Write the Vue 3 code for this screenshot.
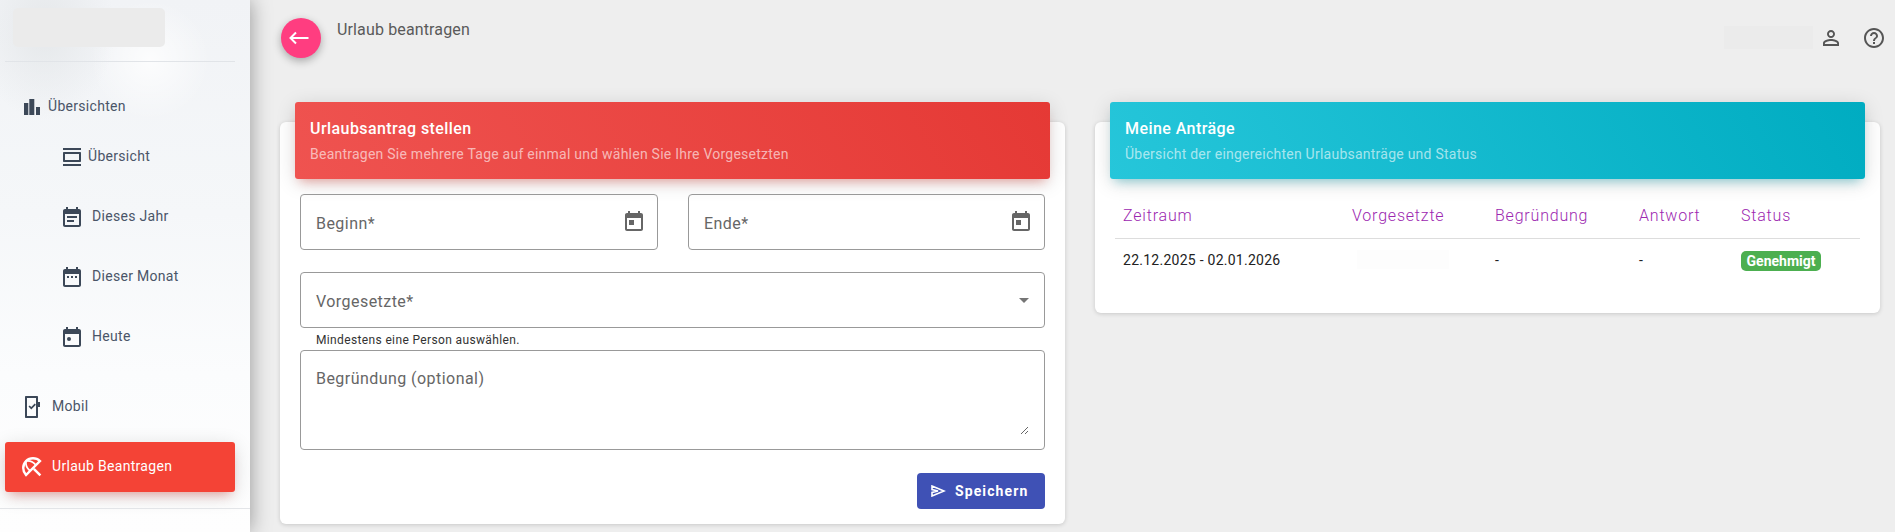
<template>
  <div class="layout">
    <aside class="sidebar">
      <div class="logo-wrap"><div class="logo"></div></div>
      <nav class="nav">
        <div class="parent">
          <svg class="ic-parent" viewBox="0 0 16 16"><path d="M0 4h4.3v12H0zM5.3 0h5v16h-5zM12 8h4v8h-4z" /></svg>
          <span>Übersichten</span>
        </div>
        <a class="sub first">
          <svg class="ic-sub" viewBox="0 0 18 18"><path d="M0 0h18v2H0zM0 16h18v2H0zM1 4h16c.6 0 1 .4 1 1v8c0 .6-.4 1-1 1H1c-.6 0-1-.4-1-1V5c0-.6.4-1 1-1zm1 2v6h14V6z" /></svg>
          <span>Übersicht</span>
        </a>
        <a class="sub">
          <svg class="ic-sub tall" viewBox="3 1 18 20"><path d="M17 10H7v2h10v-2zm2-7h-1V1h-2v2H8V1H6v2H5c-1.11 0-1.99.9-1.99 2L3 19c0 1.1.89 2 2 2h14c1.1 0 2-.9 2-2V5c0-1.1-.9-2-2-2zm0 16H5V8h14v11zm-5-5H7v2h7v-2z" /></svg>
          <span>Dieses Jahr</span>
        </a>
        <a class="sub">
          <svg class="ic-sub tall" viewBox="3 2 18 20"><path d="M9 11H7v2h2v-2zm4 0h-2v2h2v-2zm4 0h-2v2h2v-2zm2-7h-1V2h-2v2H8V2H6v2H5c-1.11 0-1.99.9-1.99 2L3 20c0 1.1.89 2 2 2h14c1.1 0 2-.9 2-2V6c0-1.1-.9-2-2-2zm0 16H5V9h14v11z" /></svg>
          <span>Dieser Monat</span>
        </a>
        <a class="sub">
          <svg class="ic-sub tall" viewBox="3 1 18 20"><path d="M19 3h-1V1h-2v2H8V1H6v2H5c-1.11 0-1.99.9-1.99 2L3 19c0 1.1.89 2 2 2h14c1.1 0 2-.9 2-2V5c0-1.1-.9-2-2-2zm0 16H5V8h14v11z" /><circle cx="9" cy="13" r="2" /></svg>
          <span>Heute</span>
        </a>
        <a class="top-item mobil">
          <svg class="ic-mobil" viewBox="0 0 15 22">
            <path d="M1 0h11c.6 0 1 .4 1 1v5h2v5h-2v10c0 .6-.4 1-1 1H1c-.6 0-1-.4-1-1V1c0-.6.4-1 1-1zm1 2v18h9V2z" />
            <path d="M3.5 10.6l1.2-1.2 1.6 1.6 3.4-3.4 1.2 1.2-4.6 4.6z" />
          </svg>
          <span>Mobil</span>
        </a>
        <a class="top-item active">
          <svg class="ic-beach" viewBox="0 0 24 24">
            <path class="dome" d="M6 20C2.3 16 2.3 9.7 6 6c3.8-3.7 10.2-3.7 14 0z" />
            <path class="ribs" d="M6 6c-.5 3.5 1 7.5 4.2 10M6 6c3.5-.5 7.5 1 10 4.2" />
            <path class="dome" d="M13.8 13.8l6.6 6.6" />
          </svg>
          <span>Urlaub Beantragen</span>
        </a>
      </nav>
      <div class="nav-end"></div>
    </aside>

    <main class="main">
      <header class="topbar">
        <button class="back" type="button">
          <svg viewBox="0 0 24 24"><path d="M1.5 12h18M7 6.5L1.5 12 7 17.5" /></svg>
        </button>
        <h1>Urlaub beantragen</h1>
        <div class="top-actions">
          <div class="user-name"></div>
          <svg class="top-icon" viewBox="0 0 24 24"><path d="M12 5.9c1.16 0 2.1.94 2.1 2.1s-.94 2.1-2.1 2.1S9.9 9.16 9.9 8s.94-2.1 2.1-2.1m0 9c2.97 0 6.1 1.46 6.1 2.1v1.1H5.9V17c0-.64 3.13-2.1 6.1-2.1M12 4C9.79 4 8 5.79 8 8s1.79 4 4 4 4-1.79 4-4-1.79-4-4-4zm0 9c-2.67 0-8 1.34-8 4v3h16v-3c0-2.66-5.33-4-8-4z" /></svg>
          <svg class="top-icon help" viewBox="0 0 24 24"><path d="M11 18h2v-2h-2v2zm1-16C6.48 2 2 6.48 2 12s4.48 10 10 10 10-4.48 10-10S17.52 2 12 2zm0 18c-4.41 0-8-3.59-8-8s3.59-8 8-8 8 3.59 8 8-3.59 8-8 8zm0-14c-2.21 0-4 1.79-4 4h2c0-1.1.9-2 2-2s2 .9 2 2c0 2-3 1.75-3 5h2c0-2.25 3-2.5 3-5 0-2.21-1.79-4-4-4z" /></svg>
        </div>
      </header>

      <div class="cards">
        <section class="card">
          <div class="card-head red">
            <h2>Urlaubsantrag stellen</h2>
            <p>Beantragen Sie mehrere Tage auf einmal und wählen Sie Ihre Vorgesetzten</p>
          </div>
          <form class="form" @submit.prevent>
            <div class="dates">
              <div v-for="label in dateFields" :key="label" class="field">
                <span>{{ label }}</span>
                <svg class="cal" viewBox="0 0 24 24"><path d="M19 3h-1V1h-2v2H8V1H6v2H5c-1.11 0-1.99.9-1.99 2L3 19c0 1.1.89 2 2 2h14c1.1 0 2-.9 2-2V5c0-1.1-.9-2-2-2zm0 16H5V8h14v11zM7 10h5v5H7z" /></svg>
              </div>
            </div>
            <div class="field select">
              <span>Vorgesetzte*</span>
              <i class="caret"></i>
            </div>
            <p class="hint">Mindestens eine Person auswählen.</p>
            <div class="area-box">
              <textarea class="area" placeholder="Begründung (optional)"></textarea>
            </div>
            <div class="actions">
              <button class="save" type="submit">
                <svg viewBox="0 0 15 12"><path d="M1 1l12 5-12 5V7.4L7 6 1 4.6z" /></svg>
                Speichern
              </button>
            </div>
          </form>
        </section>

        <section class="card">
          <div class="card-head cyan">
            <h2>Meine Anträge</h2>
            <p>Übersicht der eingereichten Urlaubsanträge und Status</p>
          </div>
          <div class="table-wrap">
            <table>
              <colgroup>
                <col class="c1" /><col class="c2" /><col class="c3" /><col class="c4" /><col />
              </colgroup>
              <thead>
                <tr>
                  <th v-for="col in columns" :key="col">{{ col }}</th>
                </tr>
              </thead>
              <tbody>
                <tr v-for="row in requests" :key="row.period">
                  <td>{{ row.period }}</td>
                  <td><div class="blurred"></div></td>
                  <td>{{ row.reason }}</td>
                  <td>{{ row.answer }}</td>
                  <td><span class="badge">{{ row.status }}</span></td>
                </tr>
              </tbody>
            </table>
          </div>
        </section>
      </div>
    </main>
  </div>
</template>

<script setup>
const dateFields = ['Beginn*', 'Ende*']
const columns = ['Zeitraum', 'Vorgesetzte', 'Begründung', 'Antwort', 'Status']
const requests = [
  { period: '22.12.2025 - 02.01.2026', reason: '-', answer: '-', status: 'Genehmigt' }
]
</script>

<style>
html,
body {
  margin: 0;
  background: #eee;
}
</style>

<style scoped>
.layout {
  display: flex;
  height: 532px;
  overflow: hidden;
  background: #eee;
  font-family: Roboto, "Liberation Sans", sans-serif;
}

.sidebar {
  flex: 0 0 250px;
  position: relative;
  box-sizing: border-box;
  background:
    radial-gradient(ellipse 70px 90px at 45px 30px, rgba(225, 228, 230, 0.75), transparent),
    radial-gradient(ellipse 60px 60px at 150px 60px, rgba(255, 255, 255, 0.8), transparent),
    linear-gradient(180deg, #f1f3f6 0%, #f5f7f9 40%, #fbfcfd 70%, #fefefe 100%);
  box-shadow: 0 0 20px rgba(0, 0, 0, 0.38);
}

.logo-wrap {
  margin: 0 15px 0 5px;
  padding: 8px 0 14px 8px;
  border-bottom: 1px solid #e1e4e8;
}

.logo {
  width: 152px;
  height: 39px;
  border-radius: 5px;
  background: #ebebeb;
}

.nav {
  padding-top: 24px;
  color: #4a5568;
  font-size: 14px;
  letter-spacing: 0.3px;
}

.nav svg {
  fill: #3c4858;
  flex: none;
}

.parent {
  display: flex;
  align-items: center;
  height: 40px;
  padding-left: 24px;
}

.parent span {
  margin-left: 8px;
}

.ic-parent {
  width: 16px;
  height: 16px;
  margin-top: 2px;
}

.sub {
  display: flex;
  align-items: center;
  height: 60px;
  padding-left: 63px;
}

.sub span {
  margin-left: 11px;
}

.sub.first span {
  margin-left: 7px;
}

.ic-sub {
  width: 18px;
  height: 18px;
  margin-top: 2px;
}

.ic-sub.tall {
  height: 20px;
}

.top-item {
  display: flex;
  align-items: center;
  margin: 0 15px 0 5px;
}

.mobil {
  height: 60px;
  margin-top: 10px;
  padding-left: 20px;
}

.ic-mobil {
  width: 15px;
  height: 22px;
  margin-top: 2px;
}

.mobil span {
  margin-left: 12px;
}

.top-item.active {
  height: 50px;
  margin-top: 6px;
  padding-left: 15px;
  border-radius: 3px;
  background: #f44336;
  color: #fff;
  box-shadow: 0 4px 20px rgba(0, 0, 0, 0.14), 0 7px 10px -5px rgba(244, 67, 54, 0.4);
}

.nav .ic-beach {
  width: 24px;
  height: 24px;
  fill: none;
  stroke: #fff;
}

.dome {
  stroke-width: 2.4;
}

.ribs {
  stroke-width: 1.8;
}

.active span {
  margin-left: 8px;
  margin-top: -2px;
}

.nav-end {
  margin-top: 16px;
  border-top: 1px solid #e3e5e8;
}

.main {
  flex: 1;
  min-width: 0;
  padding: 18px 9px 0 30px;
}

.topbar {
  display: flex;
  align-items: flex-start;
  height: 40px;
}

.back {
  width: 40px;
  height: 40px;
  padding: 8px;
  margin: 0 1px 0 1px;
  border: 0;
  border-radius: 50%;
  background: #ff3d80;
  box-shadow: 0 3px 8px rgba(0, 0, 0, 0.3);
}

.back svg {
  display: block;
  width: 24px;
  height: 24px;
  fill: none;
  stroke: #fff;
  stroke-width: 2;
}

h1 {
  margin: 2px 0 0 15px;
  font-size: 16px;
  font-weight: 400;
  line-height: 20px;
  letter-spacing: 0.14px;
  color: #5a5a5a;
}

.top-actions {
  display: flex;
  margin-left: auto;
  padding-top: 7px;
  height: 24px;
  margin-top: 1px;
}

.user-name {
  width: 89px;
  height: 23px;
  background: #ebebeb;
  margin-right: 6px;
}

.top-icon {
  width: 24px;
  height: 24px;
  fill: #555;
}

.top-icon.help {
  margin-left: 19px;
}

.cards {
  display: grid;
  grid-template-columns: 785px 785px;
  gap: 30px;
  margin-top: 64px;
}

.card {
  align-self: start;
  background: #fff;
  border-radius: 6px;
  box-shadow: 0 1px 4px rgba(0, 0, 0, 0.16);
}

.card-head {
  box-sizing: border-box;
  height: 77px;
  margin: -20px 15px 0;
  padding: 16px 15px 0;
  border-radius: 3px;
  color: #fff;
}

.card-head.red {
  background: linear-gradient(60deg, #ef5350, #e53935);
  box-shadow: 0 4px 20px rgba(0, 0, 0, 0.14), 0 7px 10px -5px rgba(244, 67, 54, 0.4);
}

.card-head.cyan {
  background: linear-gradient(60deg, #26c6da, #00acc1);
  box-shadow: 0 4px 20px rgba(0, 0, 0, 0.14), 0 7px 10px -5px rgba(0, 172, 193, 0.4);
}

.card-head h2 {
  margin: 0;
  font-size: 16px;
  font-weight: 500;
  line-height: 22px;
  letter-spacing: 0.43px;
}

.card-head p {
  margin: 4px 0 0;
  font-size: 14px;
  line-height: 20px;
  letter-spacing: 0.24px;
  color: rgba(255, 255, 255, 0.62);
}

.form {
  padding: 15px 20px;
}

.dates {
  display: grid;
  grid-template-columns: 358px 357px;
  gap: 30px;
  margin-bottom: 22px;
}

.field {
  box-sizing: border-box;
  display: flex;
  align-items: center;
  justify-content: space-between;
  height: 56px;
  padding: 0 11px 0 15px;
  border: 1px solid #999;
  border-radius: 4px;
  font-size: 16px;
  letter-spacing: 0.45px;
  color: #666;
}

.field span {
  margin-top: 2px;
}

.cal {
  width: 24px;
  height: 24px;
  fill: #666;
}

.caret {
  width: 0;
  height: 0;
  margin-right: 4px;
  border-left: 5px solid transparent;
  border-right: 5px solid transparent;
  border-top: 5px solid #757575;
}

.hint {
  margin: 0;
  height: 22px;
  padding-left: 16px;
  font-size: 12px;
  line-height: 24px;
  letter-spacing: 0.03em;
  color: #333;
}

.area-box {
  box-sizing: border-box;
  height: 100px;
  padding: 16px 15px 14px;
  border: 1px solid #999;
  border-radius: 4px;
}

.area {
  display: block;
  box-sizing: border-box;
  width: 100%;
  height: 68px;
  padding: 0;
  border: 0;
  outline: none;
  font: 400 16px/24px Roboto, "Liberation Sans", sans-serif;
  letter-spacing: 0.45px;
}

.area::placeholder {
  color: #666;
  opacity: 1;
}

.actions {
  display: flex;
  justify-content: flex-end;
  margin-top: 23px;
}

.save {
  display: flex;
  align-items: center;
  gap: 9px;
  box-sizing: border-box;
  width: 128px;
  height: 36px;
  padding: 0 0 0 14px;
  border: 0;
  border-radius: 4px;
  background: #3f51b5;
  color: #fff;
  font: 700 14px Roboto, "Liberation Sans", sans-serif;
  letter-spacing: 1.1px;
}

.save svg {
  width: 15px;
  height: 12px;
  fill: none;
  stroke: #fff;
  stroke-width: 1.6;
}

.table-wrap {
  padding: 17px 20px 32px;
}

table {
  width: 100%;
  table-layout: fixed;
  border-collapse: collapse;
}

.c1 { width: 229px; }
.c2 { width: 143px; }
.c3 { width: 144px; }
.c4 { width: 102px; }

th {
  box-sizing: border-box;
  height: 42px;
  padding: 0 8px 2px;
  border-bottom: 1px solid #ddd;
  text-align: left;
  font-size: 16px;
  font-weight: 300;
  letter-spacing: 0.05em;
  color: #9c27b0;
}

td {
  height: 42px;
  padding: 0 8px;
  font-size: 14px;
  letter-spacing: 0.26px;
  color: #222;
}

.blurred {
  width: 92px;
  height: 19px;
  margin-left: 5px;
  background: #fdfdfd;
}

.badge {
  display: block;
  width: 80px;
  height: 20px;
  margin-top: 2px;
  border-radius: 5px;
  background: #4caf50;
  color: #fff;
  font-size: 14px;
  font-weight: 700;
  letter-spacing: 0;
  line-height: 20px;
  text-align: center;
}
</style>
